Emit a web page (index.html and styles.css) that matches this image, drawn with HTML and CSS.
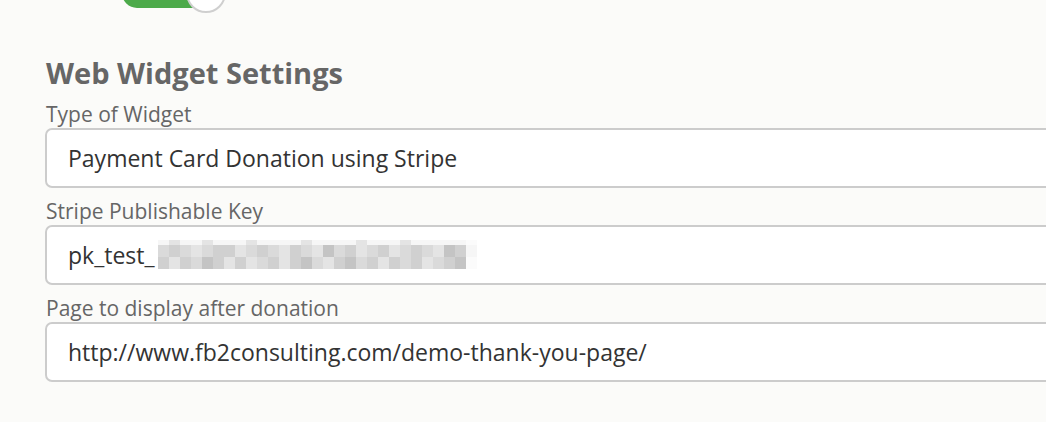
FILE: index.html
```html
<!DOCTYPE html>
<html lang="en">
  <head>
    <meta charset="UTF-8">
    <meta name="viewport" content="width=device-width, initial-scale=1.0">
    <title>Web Widget Settings</title>
    <link rel="stylesheet" href="styles.css">
  </head>

  <body>
    <div class="toggle-row">
      <div class="toggle">
        <span class="toggle-track"></span>
        <span class="toggle-knob"></span>
      </div>
    </div>

    <div class="settings">
      <h2 class="settings-title">Web Widget Settings</h2>

      <div class="field">
        <label class="field-label">Type of Widget</label>
        <div class="field-input">Payment Card Donation using Stripe</div>
      </div>

      <div class="field">
        <label class="field-label">Stripe Publishable Key</label>
        <div class="field-input">
          <span>pk_test_</span>
          <span class="redacted">
            <span class="px e"></span><span class="px c"></span><span class="px e"></span><span class="px e"></span><span class="px c"></span><span class="px e"></span><span class="px e"></span><span class="px e"></span><span class="px c"></span><span class="px e"></span><span class="px e"></span><span class="px e"></span><span class="px e"></span><span class="px c"></span><span class="px e"></span><span class="px e"></span><span class="px e"></span><span class="px e"></span><span class="px c"></span><span class="px e"></span><span class="px e"></span><span class="px e"></span><span class="px c"></span><span class="px e"></span><span class="px e"></span><span class="px e"></span><span class="px e"></span><span class="px e"></span><span class="px f"></span>
            <span class="px a"></span><span class="px b"></span><span class="px a"></span><span class="px c"></span><span class="px a"></span><span class="px b"></span><span class="px b"></span><span class="px c"></span><span class="px a"></span><span class="px b"></span><span class="px a"></span><span class="px c"></span><span class="px b"></span><span class="px a"></span><span class="px c"></span><span class="px d"></span><span class="px a"></span><span class="px b"></span><span class="px c"></span><span class="px a"></span><span class="px b"></span><span class="px c"></span><span class="px a"></span><span class="px b"></span><span class="px a"></span><span class="px c"></span><span class="px d"></span><span class="px b"></span><span class="px e"></span>
            <span class="px b"></span><span class="px c"></span><span class="px b"></span><span class="px a"></span><span class="px d"></span><span class="px b"></span><span class="px c"></span><span class="px b"></span><span class="px c"></span><span class="px a"></span><span class="px b"></span><span class="px c"></span><span class="px b"></span><span class="px d"></span><span class="px a"></span><span class="px c"></span><span class="px b"></span><span class="px d"></span><span class="px a"></span><span class="px b"></span><span class="px c"></span><span class="px b"></span><span class="px a"></span><span class="px b"></span><span class="px c"></span><span class="px a"></span><span class="px b"></span><span class="px d"></span><span class="px f"></span>
          </span>
        </div>
      </div>

      <div class="field">
        <label class="field-label">Page to display after donation</label>
        <div class="field-input">http://www.fb2consulting.com/demo-thank-you-page/</div>
      </div>
    </div>
  </body>
</html>
```

FILE: styles.css
```css
body {
  margin: 0;
  background-color: #fbfbf9;
  font-family: 'Open Sans', 'Segoe UI', sans-serif;
  overflow: hidden;
}

.toggle-row {
  height: 14px;
  padding-left: 122px;
}

.toggle {
  position: relative;
  width: 104px;
  height: 14px;
}
.toggle-track {
  position: absolute;
  left: 0;
  bottom: 6px;
  width: 90px;
  height: 30px;
  border-radius: 15px;
  background-color: #4caa4a;
}
.toggle-knob {
  position: absolute;
  left: 64px;
  bottom: 1px;
  width: 36px;
  height: 36px;
  border-radius: 50%;
  background-color: #fff;
  border: 2px solid #cfcfcf;
}

.settings {
  padding: 39px 0 0 45px;
}

.settings-title {
  margin: 0 0 8px 1px;
  font-size: 29px;
  font-weight: 700;
  line-height: 40px;
  color: #666;
}

.field {
  display: flex;
  flex-direction: column;
  margin-bottom: 10px;
}

.field-label {
  padding-left: 1px;
  font-size: 21px;
  line-height: 27px;
  color: #666;
}

.field-input {
  box-sizing: border-box;
  display: flex;
  align-items: center;
  width: 1100px;
  height: 60px;
  padding-left: 21px;
  border: 2px solid #ccc;
  border-radius: 7px;
  background-color: #fff;
  font-size: 23px;
  color: #333;
}

.redacted {
  display: grid;
  grid-template-columns: repeat(29, 11px);
  grid-template-rows: 5px 12px 12px;
  margin-left: 3px;
  margin-top: -2px;
}
.px.a { background-color: #dadada; }
.px.b { background-color: #d0d0d0; }
.px.c { background-color: #e4e4e4; }
.px.d { background-color: #c4c4c4; }
.px.e { background-color: #f6f6f6; }
.px.f { background-color: #fbfbfb; }
```
